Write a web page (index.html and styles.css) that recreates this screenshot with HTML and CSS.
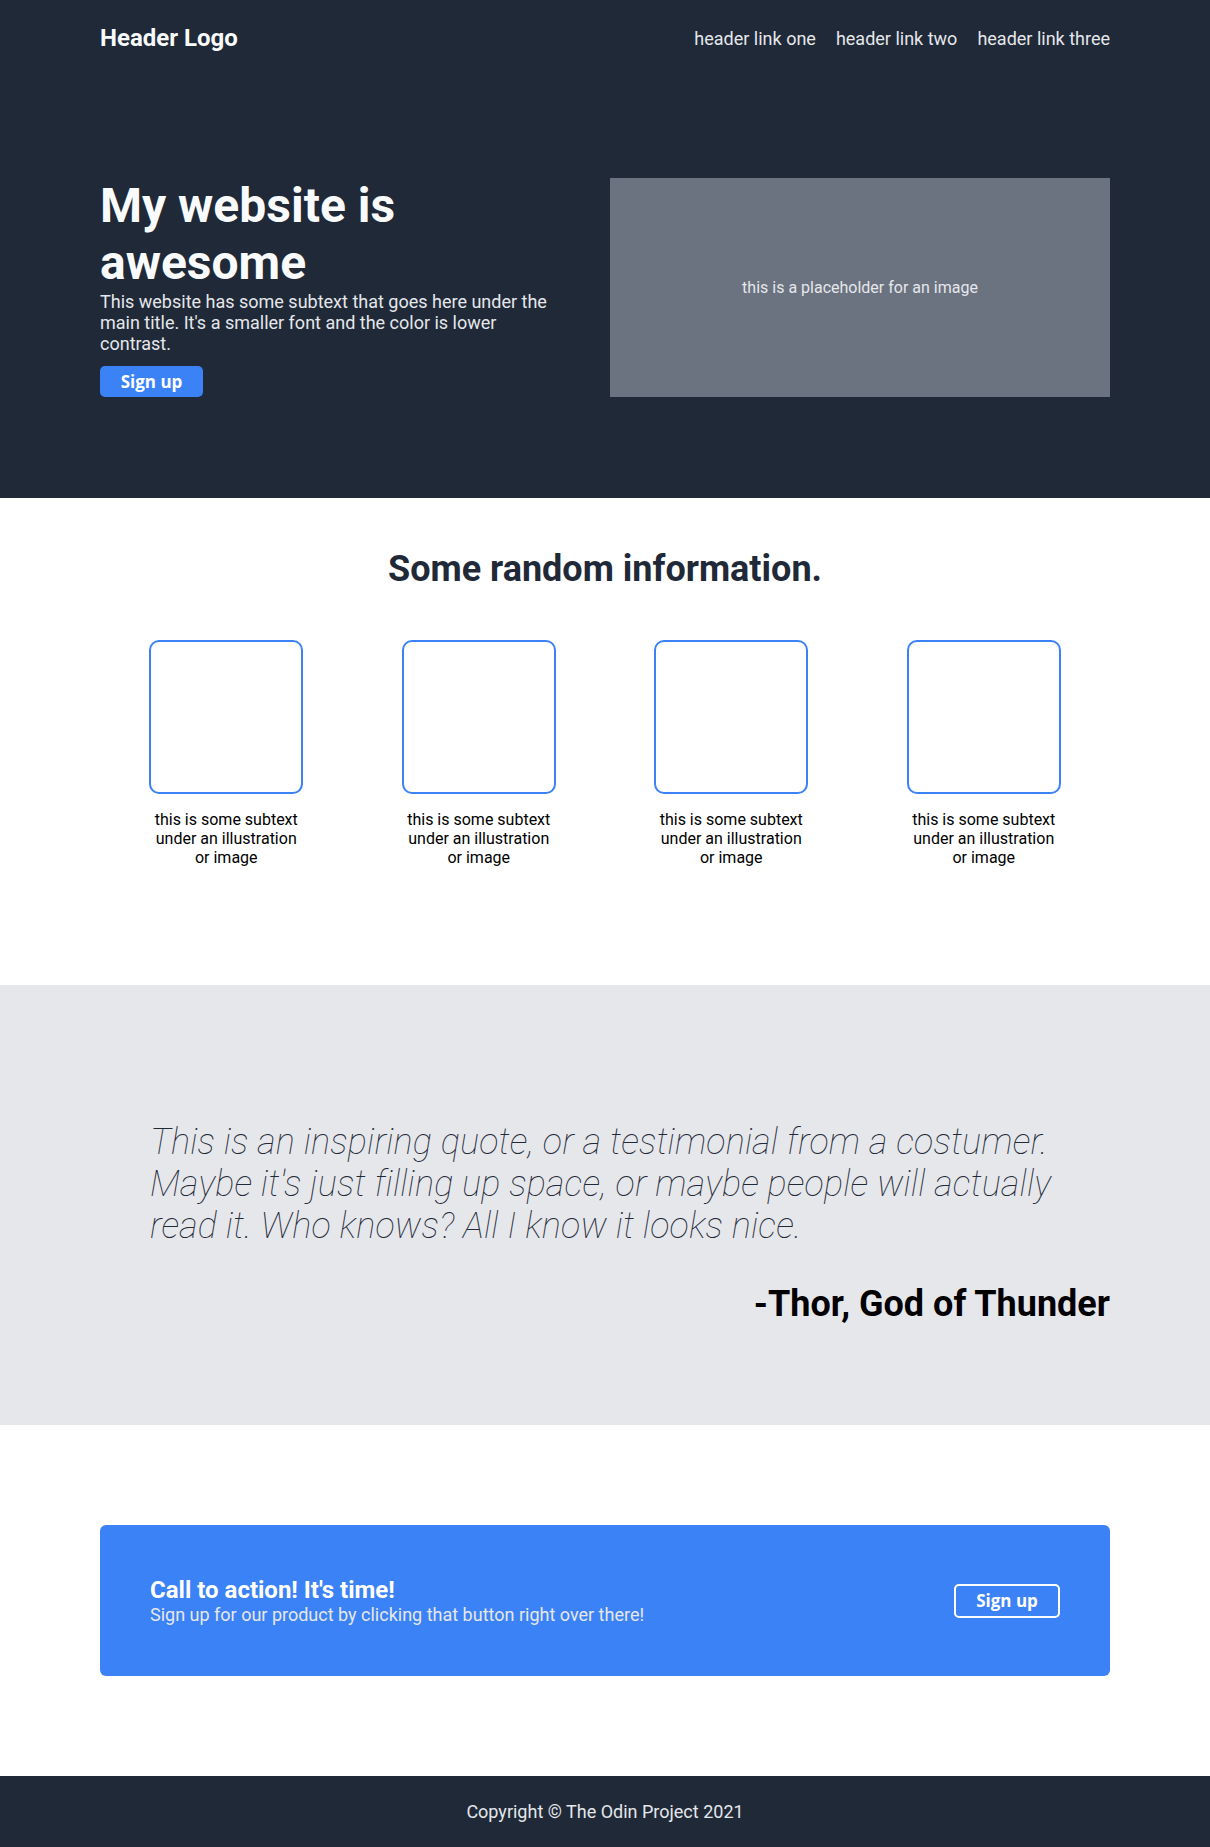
FILE: index.html
```html
<!DOCTYPE html>
<html lang="en">
<head>
<meta charset="utf-8">
<title>My website is awesome</title>
<link rel="stylesheet" href="styles.css">
</head>
<body>
<div class="top">
  <header class="header">
    <div class="logo">Header Logo</div>
    <nav class="nav">
      <a href="#" class="nav-link">header link one</a>
      <a href="#" class="nav-link">header link two</a>
      <a href="#" class="nav-link">header link three</a>
    </nav>
  </header>
  <section class="hero">
    <div class="hero-text">
      <h1 class="hero-title">My website is awesome</h1>
      <p class="hero-sub">This website has some subtext that goes here under the main title. It's a smaller font and the color is lower contrast.</p>
      <button class="btn btn-solid">Sign up</button>
    </div>
    <div class="hero-image">this is a placeholder for an image</div>
  </section>
</div>

<section class="info">
  <h2 class="info-title">Some random information.</h2>
  <div class="info-items">
    <div class="info-item">
      <div class="info-box"></div>
      <p class="info-text">this is some subtext under an illustration or image</p>
    </div>
    <div class="info-item">
      <div class="info-box"></div>
      <p class="info-text">this is some subtext under an illustration or image</p>
    </div>
    <div class="info-item">
      <div class="info-box"></div>
      <p class="info-text">this is some subtext under an illustration or image</p>
    </div>
    <div class="info-item">
      <div class="info-box"></div>
      <p class="info-text">this is some subtext under an illustration or image</p>
    </div>
  </div>
</section>

<section class="quote">
  <p class="quote-text">This is an inspiring quote, or a testimonial from a costumer. Maybe it's just filling up space, or maybe people will actually read it. Who knows? All I know it looks nice.</p>
  <p class="quote-author">-Thor, God of Thunder</p>
</section>

<section class="cta">
  <div class="cta-box">
    <div class="cta-text">
      <div class="cta-title">Call to action! It's time!</div>
      <div class="cta-sub">Sign up for our product by clicking that button right over there!</div>
    </div>
    <button class="btn btn-outline">Sign up</button>
  </div>
</section>

<footer class="footer">Copyright © The Odin Project 2021</footer>
</body>
</html>
```

FILE: styles.css
```css
* {
  box-sizing: border-box;
}

body {
  margin: 0;
  font-family: Roboto, "Liberation Sans", sans-serif;
  background: #ffffff;
}

.top {
  background: #1f2937;
  padding: 24px 100px 101px;
}

.header {
  display: flex;
  justify-content: space-between;
  align-items: center;
  height: 28px;
}

.logo {
  font-size: 24px;
  font-weight: 700;
  color: #f9fafb;
}

.nav {
  display: flex;
  gap: 20px;
}

.nav-link {
  font-size: 18px;
  color: #e5e7eb;
  text-decoration: none;
}

.hero {
  margin-top: 125px;
  display: flex;
  align-items: center;
  gap: 50px;
}

.hero-text {
  flex: 1;
}

.hero-title {
  margin: 0;
  font-size: 48px;
  font-weight: 700;
  line-height: normal;
  color: #f9fafb;
}

.hero-sub {
  margin: 0;
  font-size: 18px;
  color: #e5e7eb;
}

.btn {
  font-family: "Open Sans", "Noto Sans", sans-serif;
  font-weight: 700;
  font-size: 17px;
  color: #ffffff;
  cursor: pointer;
  display: flex;
  align-items: center;
  justify-content: center;
  padding: 0;
}

.btn-solid {
  margin-top: 12px;
  width: 103px;
  height: 31px;
  background: #3b82f6;
  border: none;
  border-radius: 5px;
}

.btn-outline {
  width: 106px;
  height: 34px;
  background: transparent;
  border: 2px solid #ffffff;
  border-radius: 5px;
}

.hero-image {
  width: 500px;
  height: 219px;
  background: #6b7280;
  display: flex;
  align-items: center;
  justify-content: center;
  font-size: 16px;
  color: #e5e7eb;
}

.info {
  padding: 50px 100px 118px;
}

.info-title {
  margin: 0;
  text-align: center;
  font-size: 36px;
  font-weight: 700;
  line-height: normal;
  color: #1f2937;
}

.info-items {
  margin-top: 50px;
  display: flex;
  justify-content: space-around;
}

.info-item {
  width: 154px;
}

.info-box {
  width: 154px;
  height: 154px;
  border: 2px solid #3b82f6;
  border-radius: 10px;
}

.info-text {
  margin: 16px 0 0;
  text-align: center;
  font-size: 16px;
  color: #000000;
}

.quote {
  background: #e5e7eb;
  padding: 100px;
}

.quote-text {
  margin: 36px 50px;
  font-size: 36px;
  font-style: italic;
  font-weight: 100;
  letter-spacing: 0.14px;
  color: #1f2937;
}

.quote-author {
  margin: 0;
  text-align: right;
  font-size: 36px;
  font-weight: 700;
  color: #000000;
}

.cta {
  padding: 100px;
}

.cta-box {
  background: #3b82f6;
  border-radius: 6px;
  padding: 51px 50px;
  display: flex;
  justify-content: space-between;
  align-items: center;
}

.cta-title {
  font-size: 24px;
  font-weight: 700;
  color: #ffffff;
}

.cta-sub {
  font-size: 18px;
  color: #e5e7eb;
}

.footer {
  background: #1f2937;
  height: 71px;
  display: flex;
  align-items: center;
  justify-content: center;
  font-size: 18px;
  color: #e5e7eb;
}
```
